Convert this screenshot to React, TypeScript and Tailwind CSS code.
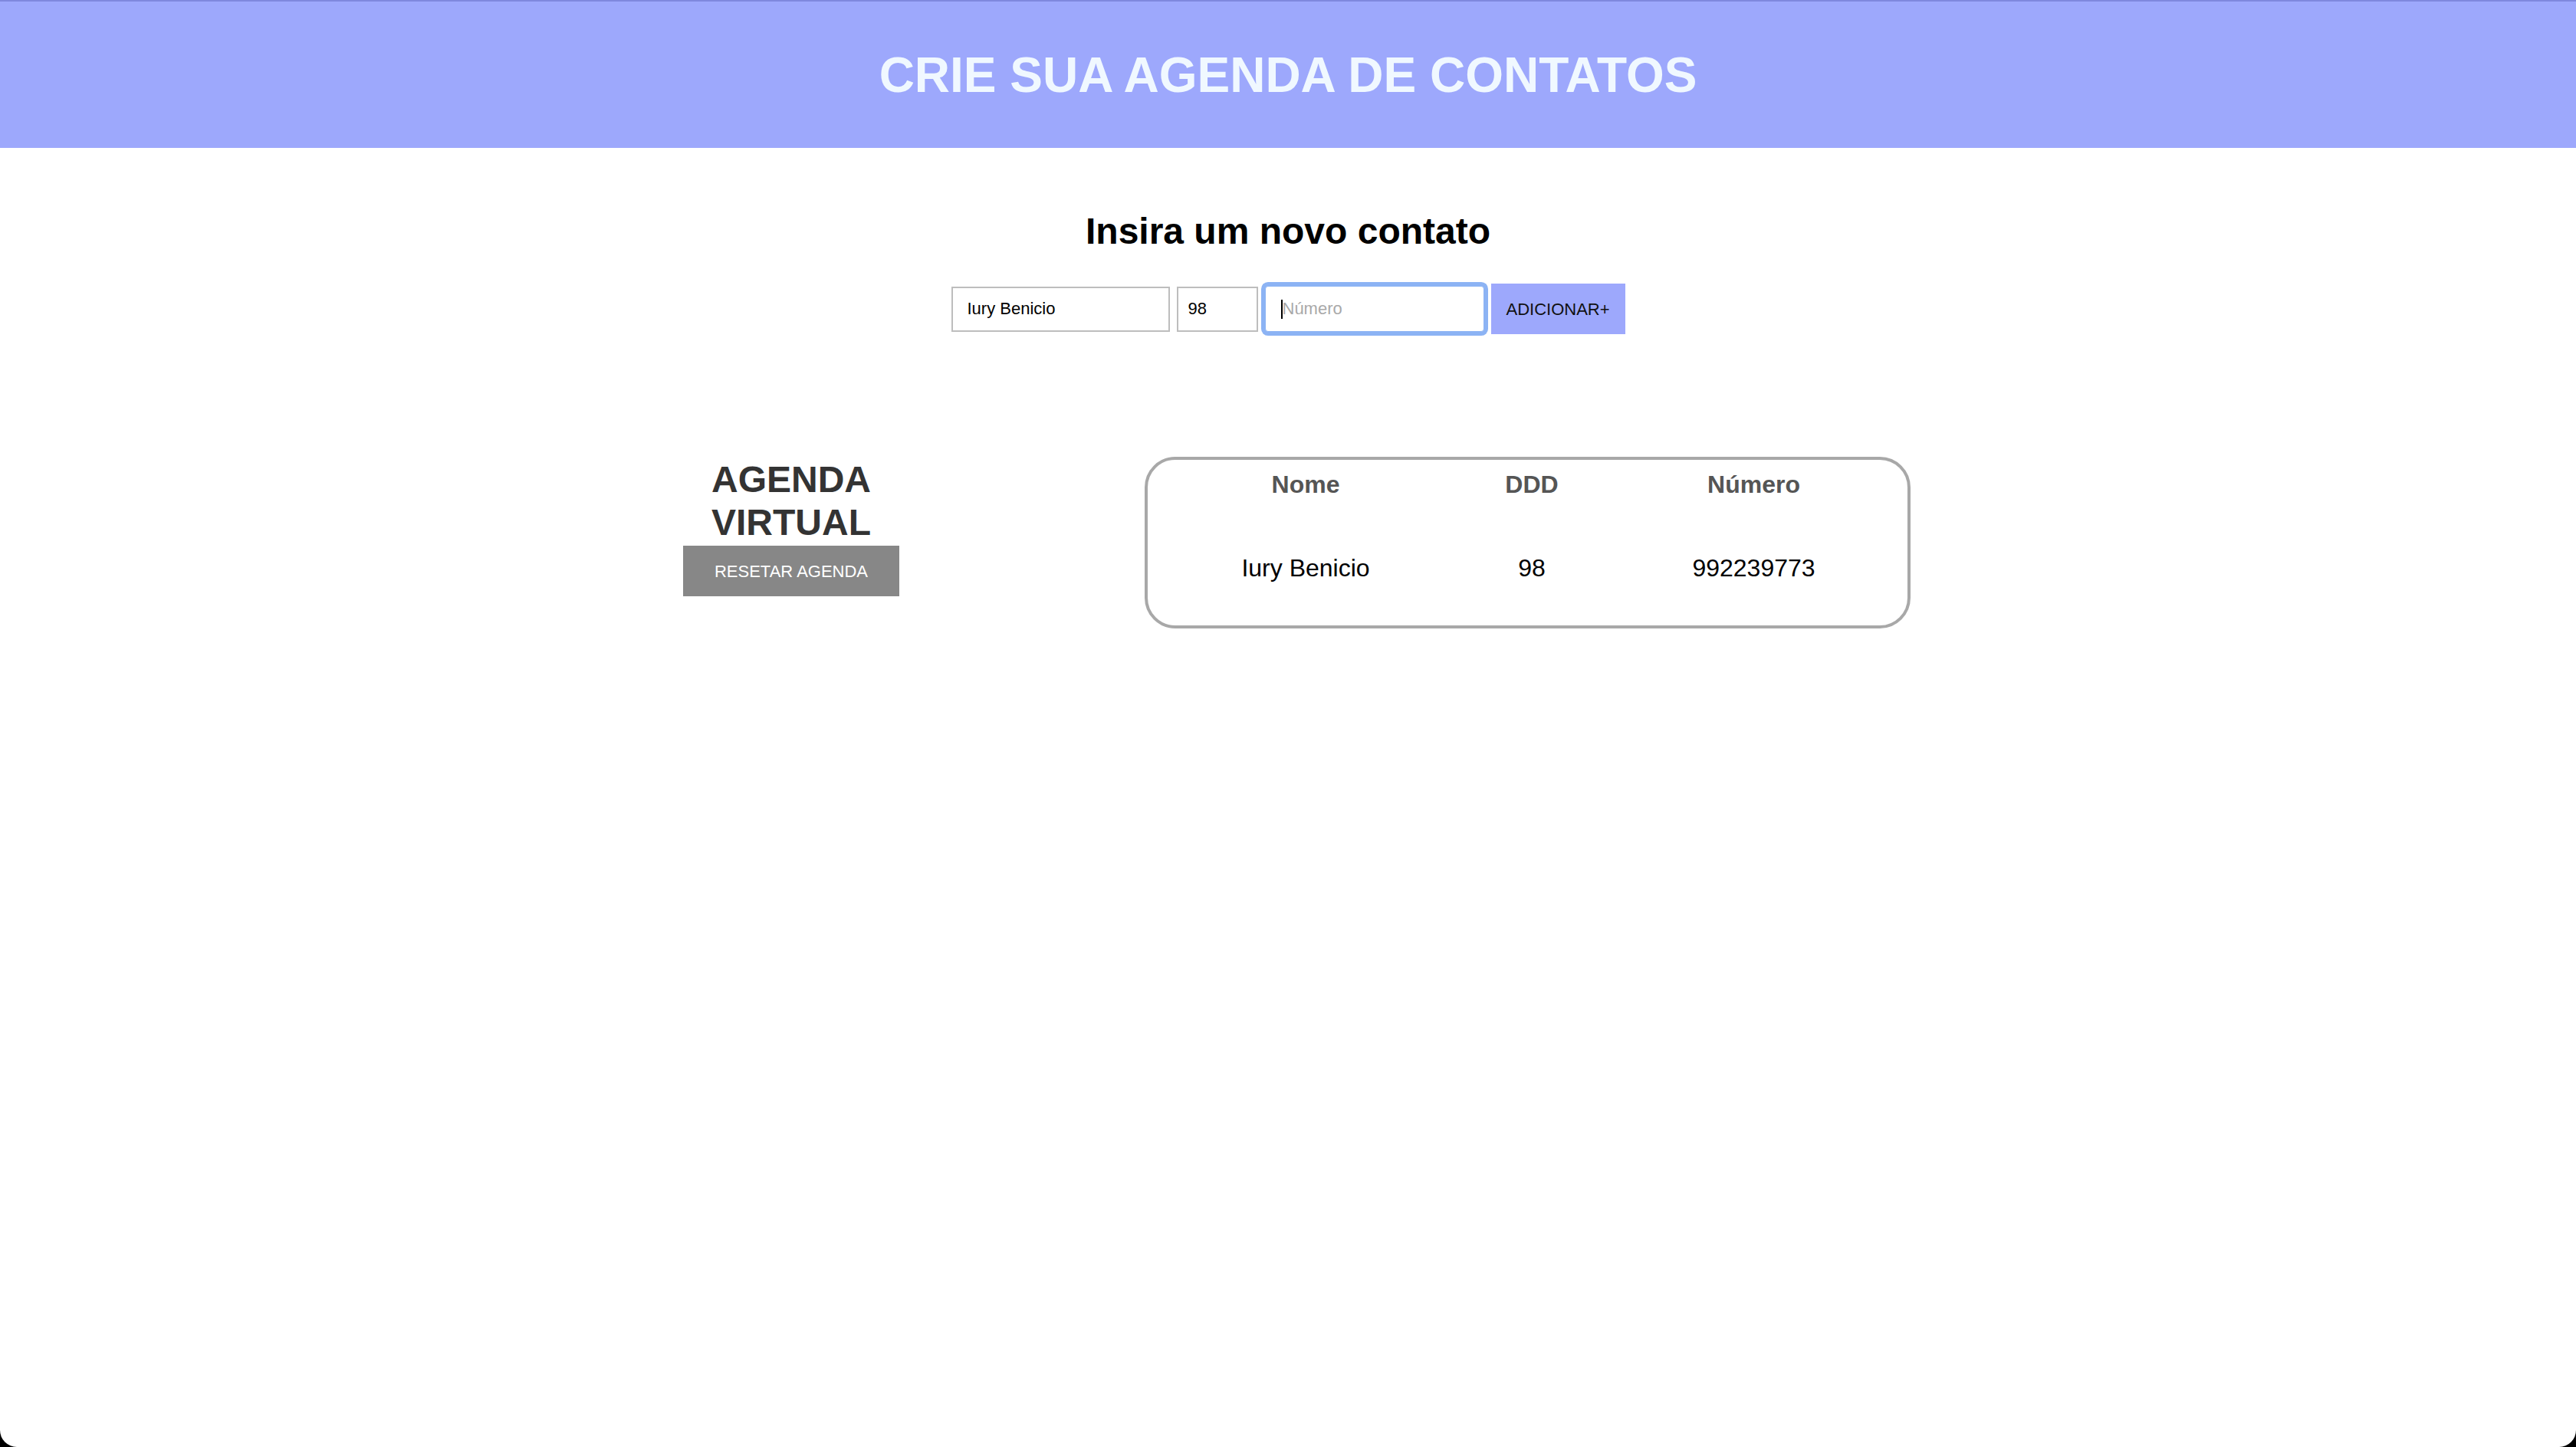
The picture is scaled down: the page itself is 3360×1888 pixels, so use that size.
import React from 'react';

const contatos = [{ nome: 'Iury Benicio', ddd: '98', numero: '992239773' }];

export default function App() {
  return (
    <div className="min-h-screen bg-black font-['Liberation_Sans',Arial,sans-serif]">
      <div className="h-[1888px] overflow-hidden rounded-b-[22px] bg-white">
        {/* Cabeçalho */}
        <header className="flex h-[193px] items-center justify-center border-t-2 border-[#7f88de] bg-[#9da8fc]">
          <h1 className="text-[64px] font-bold leading-none text-[#f0f8ff]">CRIE SUA AGENDA DE CONTATOS</h1>
        </header>

        {/* Formulário */}
        <section className="flex flex-col items-center pt-[81px]">
          <h2 className="text-[48px] font-bold leading-[55px] text-black">Insira um novo contato</h2>
          <form className="mt-[41px] flex h-[66px] items-center gap-[9px]" onSubmit={(e) => e.preventDefault()}>
            <input
              type="text"
              defaultValue="Iury Benicio"
              placeholder="Nome"
              className="h-[59px] w-[285px] border-2 border-[#bdbdbd] bg-white pl-[19px] text-[22px] text-black outline-none"
            />
            <input
              type="text"
              defaultValue="98"
              placeholder="DDD"
              className="h-[59px] w-[106px] border-2 border-[#bdbdbd] bg-white pl-[13px] text-[22px] text-black outline-none"
            />
            <div className="relative h-[60px] w-[286px]">
              <input
                type="text"
                placeholder="Número"
                className="h-full w-full rounded-[4px] border border-[#8cb3f4] bg-white pl-[22px] text-[22px] text-black outline-none ring-[5px] ring-[#8cb3f4] placeholder:text-[#a9a9a9]"
              />
              <span className="absolute left-[21px] top-[18px] h-[25px] w-[2px] bg-black" />
            </div>
            <button type="submit" className="h-[66px] w-[175px] bg-[#9da8fc] text-[22px] text-[#111]">
              ADICIONAR+
            </button>
          </form>
        </section>

        {/* Agenda */}
        <section className="mt-[160px] flex items-start justify-center pl-[23px]">
          <div className="flex w-[282px] flex-col items-center">
            <h2 className="pt-[2px] text-center text-[48px] font-bold leading-[56px] text-[#333]">
              AGENDA
              <br />
              VIRTUAL
            </h2>
            <button className="mt-[2px] h-[66px] w-[282px] bg-[#878787] text-[22px] text-white">RESETAR AGENDA</button>
          </div>

          <div className="ml-[320px] h-[224px] w-[999px] rounded-[40px] border-4 border-[#a8a8a8]">
            <div className="grid grid-cols-[345px_245px_334px] justify-center text-center">
              <div className="flex h-[64px] items-center justify-center text-[32px] font-bold text-[#555]">Nome</div>
              <div className="flex h-[64px] items-center justify-center text-[32px] font-bold text-[#555]">DDD</div>
              <div className="flex h-[64px] items-center justify-center text-[32px] font-bold text-[#555]">Número</div>
            </div>
            {contatos.map((c) => (
              <div key={c.numero} className="mt-[45px] grid grid-cols-[345px_245px_334px] justify-center text-center">
                <div className="flex h-[64px] items-center justify-center text-[32px] text-black">{c.nome}</div>
                <div className="flex h-[64px] items-center justify-center text-[32px] text-black">{c.ddd}</div>
                <div className="flex h-[64px] items-center justify-center text-[32px] text-black">{c.numero}</div>
              </div>
            ))}
          </div>
        </section>
      </div>
    </div>
  );
}
